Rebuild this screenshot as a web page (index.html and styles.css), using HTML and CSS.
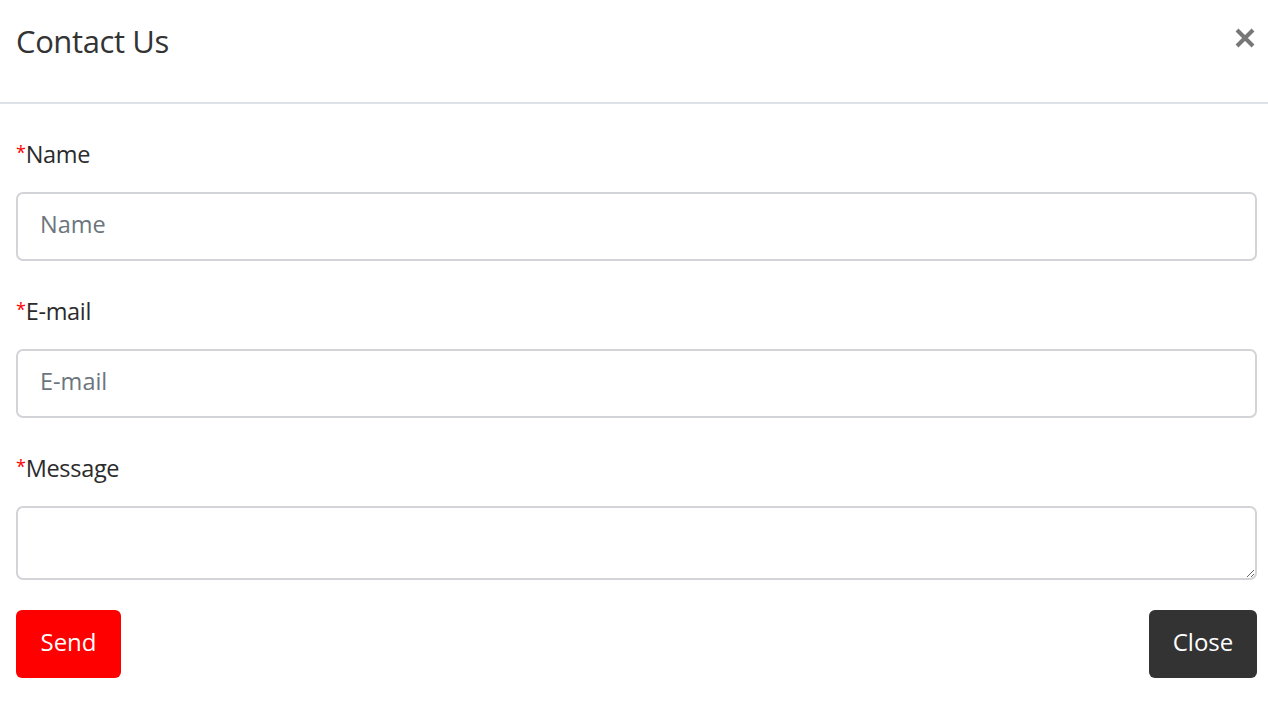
FILE: index.html
```html
<!DOCTYPE html>
<html>
<head>
<meta charset="utf-8">
<link rel="stylesheet" href="styles.css">
</head>
<body>
<div class="modal">
  <div class="modal-header">
    <h1 class="modal-title">Contact Us</h1>
    <button class="close-x" aria-label="Close">
      <svg width="22" height="22" viewBox="0 0 22 22"><path d="M3 3 L19 19 M19 3 L3 19" stroke="#777" stroke-width="4" stroke-linecap="butt"/></svg>
    </button>
  </div>
  <form class="modal-body">
    <div class="group">
      <label class="label"><span class="req">*</span>Name</label>
      <input class="field" type="text" placeholder="Name">
    </div>
    <div class="group">
      <label class="label"><span class="req">*</span>E-mail</label>
      <input class="field" type="text" placeholder="E-mail">
    </div>
    <div class="group group-last">
      <label class="label"><span class="req">*</span>Message</label>
      <textarea class="field area"></textarea>
    </div>
    <div class="actions">
      <button type="button" class="btn send">Send</button>
      <button type="button" class="btn close">Close</button>
    </div>
  </form>
</div>
</body>
</html>
```
FILE: styles.css
```css
* { box-sizing: border-box; }
html, body { margin: 0; padding: 0; background: #fff; }
body { font-family: "Open Sans", "Noto Sans", sans-serif; color: #212529; }
.modal { width: 1268px; }
.modal-header {
  height: 104px;
  border-bottom: 2px solid #dee2e6;
  display: flex;
  align-items: flex-start;
  justify-content: space-between;
  padding: 19px 12px 0 16px;
}
.modal-title {
  margin: 0;
  font-size: 31px;
  font-weight: 400;
  line-height: 44px;
  color: #333;
  letter-spacing: -0.4px;
}
.close-x {
  border: 0;
  background: none;
  padding: 0;
  margin-top: 8px;
  width: 22px;
  height: 22px;
  display: flex;
}
.modal-body {
  padding: 31px 11px 0 16px;
  display: flex;
  flex-direction: column;
}
.group { display: flex; flex-direction: column; margin-bottom: 31px; }
.group-last { margin-bottom: 30px; }
.label {
  font-size: 23.5px;
  font-weight: 400;
  line-height: 34px;
  color: #2b2b2b;
  margin-bottom: 21px;
  letter-spacing: -0.3px;
}
.req { color: #f00; font-size: 18px; vertical-align: 4px; }
.field {
  width: 100%;
  height: 69px;
  border: 2px solid #d3d4d8;
  border-radius: 7px;
  padding: 0 22px 5px;
  font-family: inherit;
  font-size: 23.5px;
  color: #333;
  background: #fff;
  outline: none;
}
.field::placeholder { color: #6c757d; }
.area { height: 74px; resize: vertical; padding: 12px 22px; }
.actions { display: flex; justify-content: space-between; }
.btn {
  height: 68px;
  border: 0;
  border-radius: 6px;
  font-family: inherit;
  font-size: 24px;
  color: #fff;
  padding: 0 0 6px;
}
.send { background: #ff0000; width: 105px; }
.close { background: #333333; width: 108px; }
```
